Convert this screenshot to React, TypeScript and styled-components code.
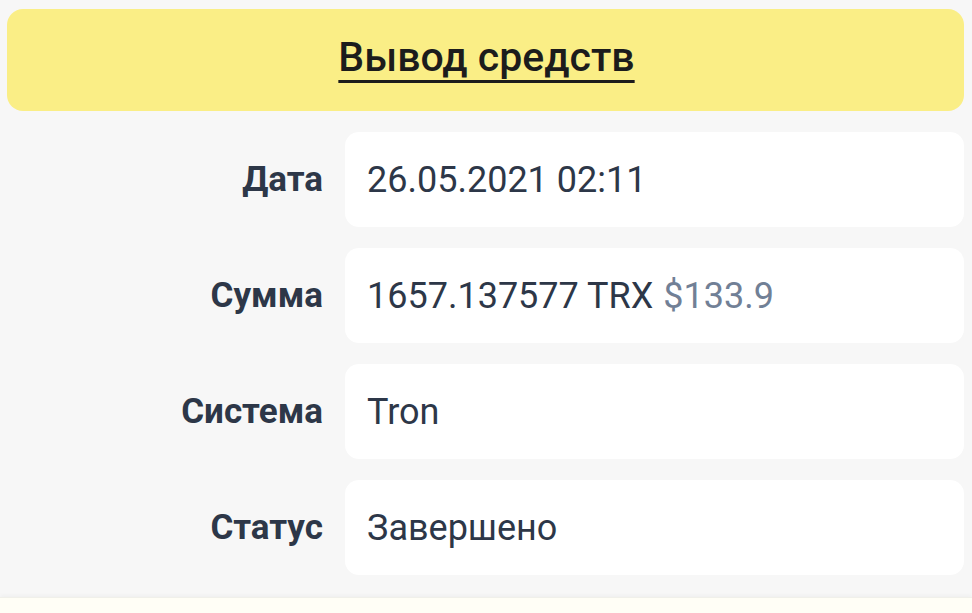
import React from "react";
import styled, { createGlobalStyle } from "styled-components";

const Global = createGlobalStyle`
  html, body { margin: 0; padding: 0; background: #f7f7f7; }
  body { font-family: Roboto, "Noto Sans", "Liberation Sans", sans-serif; }
`;

const Page = styled.div`
  padding: 9px 8px 0 7px;
  display: flex;
  flex-direction: column;
  min-height: 613px;
  box-sizing: border-box;
`;

const Header = styled.div`
  background: #faee86;
  border-radius: 16px;
  height: 102px;
  display: flex;
  align-items: center;
  justify-content: center;
`;

const Title = styled.h1`
  margin: 0 0 6px 0;
  font-size: 41px;
  font-weight: 500;
  color: #1c1c1c;
  text-decoration: underline;
  text-decoration-thickness: 3px;
  text-underline-offset: 9px;
  padding-left: 2px;
`;

const Table = styled.div`
  display: grid;
  grid-template-columns: 316px 1fr;
  column-gap: 22px;
  row-gap: 21px;
  margin-top: 21px;
`;

const Label = styled.div`
  display: flex;
  align-items: center;
  justify-content: flex-end;
  font-size: 35px;
  font-weight: 700;
  color: #2d3748;
`;

const Value = styled.div`
  background: #ffffff;
  border-radius: 14px;
  height: 95px;
  display: flex;
  align-items: center;
  padding-left: 22px;
  font-size: 36px;
  font-weight: 400;
  color: #2d3748;
`;

const Muted = styled.span`
  color: #718096;
  margin-left: 10px;
`;

const Footer = styled.div`
  margin: 22px -8px 0 -7px;
  flex: 1;
  background: #fffef6;
  border-top: 1px solid #f0f0ea;
  box-shadow: 0 -2px 4px rgba(0, 0, 0, 0.03);
`;

const rows: { label: string; value: React.ReactNode }[] = [
  { label: "Дата", value: "26.05.2021 02:11" },
  {
    label: "Сумма",
    value: (
      <>
        1657.137577 TRX<Muted>$133.9</Muted>
      </>
    ),
  },
  { label: "Система", value: "Tron" },
  { label: "Статус", value: "Завершено" },
];

export default function App() {
  return (
    <>
      <Global />
      <Page>
        <Header>
          <Title>Вывод средств</Title>
        </Header>
        <Table>
          {rows.map((r) => (
            <React.Fragment key={r.label}>
              <Label>{r.label}</Label>
              <Value>{r.value}</Value>
            </React.Fragment>
          ))}
        </Table>
        <Footer />
      </Page>
    </>
  );
}
